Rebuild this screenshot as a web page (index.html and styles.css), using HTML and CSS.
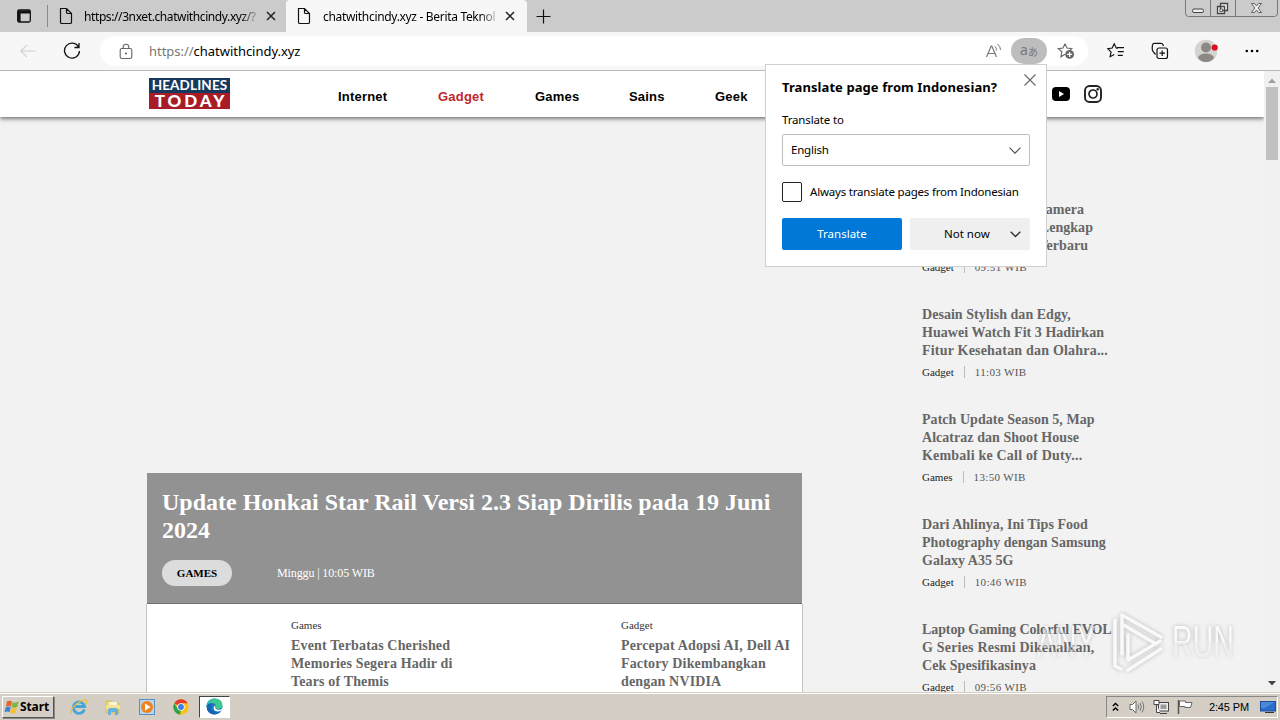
FILE: index.html
```
<!DOCTYPE html>
<html lang="id">
<head>
<meta charset="utf-8">
<title>chatwithcindy.xyz - Berita Teknologi</title>
<link rel="stylesheet" href="styles.css">
</head>
<body>
<div class="screen">
  <div class="tabstrip">
    <svg class="tab-actions" width="16" height="16" viewBox="0 0 16 16"><rect x="1.700" y="2" width="12.600" height="12" rx="1.500" fill="none" stroke="#111" stroke-width="1.300"/><path d="M2 2.500h12v3H2zM2 5h2.600v9H3L2 13z" fill="#111"/></svg>
    <div class="tab">
      <svg width="16" height="18" viewBox="0 0 16 18"><path d="M2.500 1.500h6l5 5v8.700q0 1.300-1.300 1.300H3.800q-1.300 0-1.300-1.300zM8.500 1.500v3.700q0 1.300 1.300 1.300h3.700" fill="none" stroke="#111" stroke-width="1.200"/></svg>
      <span class="tab-title">https://3nxet.chatwithcindy.xyz/?</span>
      <svg class="tab-close" width="10" height="10" viewBox="0 0 10 10"><path d="M1 1l8 8M9 1l-8 8" stroke="#222" stroke-width="1.500"/></svg>
    </div>
    <div class="tab tab-active">
      <svg width="16" height="18" viewBox="0 0 16 18"><path d="M2.500 1.500h6l5 5v8.700q0 1.300-1.300 1.300H3.800q-1.300 0-1.300-1.300zM8.500 1.500v3.700q0 1.300 1.300 1.300h3.700" fill="none" stroke="#111" stroke-width="1.200"/></svg>
      <span class="tab-title">chatwithcindy.xyz - Berita Teknol</span>
      <svg class="tab-close" width="10" height="10" viewBox="0 0 10 10"><path d="M1 1l8 8M9 1l-8 8" stroke="#222" stroke-width="1.500"/></svg>
    </div>
    <svg class="new-tab" width="15" height="15" viewBox="0 0 15 15"><path d="M7.500 .5v14M.5 7.500h14" stroke="#111" stroke-width="1.200"/></svg>
    <svg class="win-controls" width="94" height="17" viewBox="0 0 94 17"><path d="M.5 0v13q0 3.500 3 3.500h86q3 0 3-3.500V0M25.500 0v16M50.500 0v16" fill="none" stroke="#777"/><rect x="7.500" y="9" width="11" height="3.500" rx="1.500" fill="#eee" stroke="#444"/><path d="M35.500 3.500h7v7h-7zM32.500 6.500h7v7h-7z" fill="#eee" stroke="#444" stroke-width="1.300"/><rect x="35" y="9" width="2.500" height="2.500" fill="#fff" stroke="#444" stroke-width=".8"/><path d="M66.500 3.500h3l2 2.500 2-2.500h3l-3.300 4.500 3.300 4.500h-3l-2-2.500-2 2.500h-3l3.300-4.500z" fill="#eee" stroke="#555" stroke-width=".9"/></svg>
  </div>

  <div class="toolbar">
    <svg class="back" width="18" height="16" viewBox="0 0 18 16"><path d="M16.500 8H2M8 1.800L1.800 8 8 14.200" fill="none" stroke="#cfcfcf" stroke-width="1.100"/></svg>
    <svg class="reload" width="18" height="18" viewBox="0 0 18 18"><path d="M15.600 5A7.500 7.500 0 1 0 16.500 9M16 1v4.500h-4.500" fill="none" stroke="#111" stroke-width="1.300"/></svg>
    <div class="address">
      <svg width="14" height="17" viewBox="0 0 14 17"><rect x="1.200" y="5.500" width="11.600" height="10" rx="1.800" fill="none" stroke="#666" stroke-width="1.100"/><path d="M4.200 5.500V4a2.800 2.800 0 0 1 5.600 0v1.500" fill="none" stroke="#666" stroke-width="1.100"/><circle cx="7" cy="10.500" r="1" fill="#555"/></svg>
      <span class="url"><span class="scheme">https://</span>chatwithcindy.xyz</span>
      <svg class="read" width="18" height="16" viewBox="0 0 18 16"><path d="M2.500 14L7.200 3h.6L12.500 14M4.200 10.500h6.600" fill="none" stroke="#777" stroke-width="1.200"/><path d="M11 3.500q1.600 1.500 1.600 4M13.500 1q3 2.300 3 6" fill="none" stroke="#777"/></svg>
      <div class="translate-chip"><span class="chip-a">a</span><span class="chip-ja">あ</span></div>
      <svg class="star" width="18" height="18" viewBox="0 0 18 18"><path d="M8 1.800l2 4.300 4.800.5-3.400 3.300M8 12.200l-4.100 2.600 1-5L1.300 6.600 6 6.100 8 1.800" fill="none" stroke="#666" stroke-width="1.100"/><circle cx="12.600" cy="12.400" r="4.400" fill="#666"/><path d="M12.600 9.900v5M10.100 12.400h5" stroke="#fff" stroke-width="1.200"/></svg>
    </div>
    <svg class="favs" width="18" height="18" viewBox="0 0 18 18"><path d="M10.500 6.500L9.300 6 7.200 1.800 5.200 6l-4.400.7 3.200 3.200-.8 4.800 4-2.200" fill="none" stroke="#111" stroke-width="1.200"/><path d="M10 5.600h7M10.800 9.600h6M10.800 13.300h5" stroke="#111" stroke-width="1.300"/></svg>
    <svg class="collections" width="18" height="18" viewBox="0 0 18 18"><rect x="6" y="6" width="10.500" height="10.500" rx="2" fill="none" stroke="#111" stroke-width="1.200"/><path d="M11.200 8.500v5.500M8.500 11.200H14M4.500 12.500L2 9.500Q1 8 1.200 5.500L1.500 3q.3-1.600 2-1.600h6.700q1.600 0 2.300 2.600" fill="none" stroke="#111" stroke-width="1.200"/></svg>
    <svg class="avatar" width="24" height="24" viewBox="0 0 24 24"><circle cx="12" cy="12" r="11.300" fill="#d5d2d0"/><circle cx="12" cy="8.500" r="5" fill="#8b8886"/><path d="M4 19q1-4.500 8-4.500t8 4.500q-3 4-8 4t-8-4z" fill="#8b8886"/><circle cx="20.700" cy="8.500" r="3.100" fill="#e00b1c"/></svg>
    <svg class="more" width="14" height="4" viewBox="0 0 14 4"><circle cx="1.800" cy="2" r="1.300"/><circle cx="7" cy="2" r="1.300"/><circle cx="12.200" cy="2" r="1.300"/></svg>
  </div>

  <div class="viewport">
    <div class="site">
      <header class="site-header">
        <div class="logo"><span class="logo-top">HEADLINES</span><span class="logo-bottom">TODAY</span></div>
        <nav class="nav"><a>Internet</a><a class="current">Gadget</a><a>Games</a><a>Sains</a><a>Geek</a></nav>
        <div class="social">
          <svg width="18" height="14" viewBox="0 0 18 14"><rect width="18" height="14" rx="4"/><path d="M7 4l5 3-5 3z" fill="#fff"/></svg>
          <svg width="18" height="18" viewBox="0 0 18 18"><rect x="1" y="1" width="16" height="16" rx="4.500" fill="none" stroke="#222" stroke-width="1.900"/><circle cx="9" cy="9" r="4" fill="none" stroke="#222" stroke-width="1.700"/><circle cx="13.700" cy="4.300" r="1.200" fill="#222"/></svg>
        </div>
      </header>
      <div class="columns">
        <main class="main">
          <section class="hero">
            <h1>Update Honkai Star Rail Versi 2.3 Siap Dirilis pada 19 Juni<br>2024</h1>
            <div class="hero-meta"><span class="pill">GAMES</span><span class="hero-time">Minggu | 10:05 WIB</span></div>
          </section>
          <section class="cards">
            <article><p>Games</p><h2>Event Terbatas Cherished<br>Memories Segera Hadir di<br>Tears of Themis</h2></article>
            <article><p>Gadget</p><h2>Percepat Adopsi AI, Dell AI<br>Factory Dikembangkan<br>dengan NVIDIA</h2></article>
          </section>
        </main>
        <aside class="side">
          <article><h2 class="tail"><span class="t1">Kamera</span><span class="t2">Lengkap</span><span class="t3">Terbaru</span></h2><div class="meta"><b>Gadget</b><i></i><span>09:51 WIB</span></div></article>
          <article><h2>Desain Stylish dan Edgy,<br>Huawei Watch Fit 3 Hadirkan<br><span class="wide">Fitur Kesehatan dan Olahra...</span></h2><div class="meta"><b>Gadget</b><i></i><span>11:03 WIB</span></div></article>
          <article><h2>Patch Update Season 5, Map<br>Alcatraz dan Shoot House<br><span class="wide">Kembali ke Call of Duty...</span></h2><div class="meta"><b>Games</b><i></i><span>13:50 WIB</span></div></article>
          <article><h2>Dari Ahlinya, Ini Tips Food<br>Photography dengan Samsung<br>Galaxy A35 5G</h2><div class="meta"><b>Gadget</b><i></i><span>10:46 WIB</span></div></article>
          <article><h2><span class="tight">Laptop Gaming Colorful EVOL</span><br><span class="wide">G Series Resmi Dikenalkan,</span><br>Cek Spesifikasinya</h2><div class="meta"><b>Gadget</b><i></i><span>09:56 WIB</span></div></article>
        </aside>
      </div>
    </div>
    <div class="scrollbar">
      <svg width="8" height="5" viewBox="0 0 8 5"><path d="M0 5l4-4.500L8 5z" fill="#a0a0a0"/></svg>
      <div class="thumb"></div>
      <svg class="down" width="8" height="5" viewBox="0 0 8 5"><path d="M0 0l4 4.500L8 0z" fill="#444"/></svg>
    </div>
  </div>

  <div class="taskbar">
    <div class="start">
      <svg width="16" height="16" viewBox="0 0 16 16"><path d="M3 2.500q2.500-1.500 5 0L7 7.500q-2.500-1.500-5 0z" fill="#e8622a"/><path d="M8.600 3q2.500 1.500 6-.5l-1.300 5.500q-3 1.500-5.700 0z" fill="#7db842"/><path d="M1.700 8.200q2.500-1.500 5 0l-1.200 5q-2.500-1.500-5 0z" fill="#3f83d0"/><path d="M7.400 8.700q2.500 1.500 5.500 0L11.700 13.700q-3 1.500-5.500 0z" fill="#f6c22c"/></svg>
      <span>Start</span>
    </div>
    <svg class="ie" width="18" height="18" viewBox="0 0 18 18"><path d="M14.500 11.500A5.700 5.700 0 1 1 14.700 8.500H5" fill="none" stroke="#46a6dc" stroke-width="2.800"/><path d="M1.500 15.500Q-.5 12 6 6.500T16.500 2.500q1 1.500-1 4" fill="none" stroke="#e9bd3d" stroke-width="1.300"/></svg>
    <svg class="explorer" width="18" height="18" viewBox="0 0 18 18"><path d="M2 3h5l1 2h7v10H2z" fill="#edd477" stroke="#c9aa4c" stroke-width=".6"/><path d="M5 4h8v4H5z" fill="#f8f4d8"/><path d="M2 7h14v4H2z" fill="#f7e397"/><path d="M4 17v-5q0-2 2-2h6q2 0 2 2v5h-3v-3H7v3z" fill="#66b2dd"/></svg>
    <svg class="wmp" width="16" height="16" viewBox="0 0 16 16"><rect x=".5" y=".5" width="15" height="15" fill="#b8d6ef" stroke="#5a8fc0"/><circle cx="8" cy="8" r="6" fill="#f0831e"/><path d="M6 4.500l5.500 3.500L6 11.500z" fill="#fff"/></svg>
    <svg class="chrome" width="16" height="16" viewBox="0 0 16 16"><circle cx="8" cy="8" r="7.700" fill="#fbc116"/><path d="M8 8L1.300 4.200a7.700 7.700 0 0 1 13.400 0H8z" fill="#e33b2e"/><path d="M1.300 4.200L4.700 10 8 11.500l-1 4.100A7.700 7.700 0 0 1 1.300 4.200z" fill="#2da14c"/><circle cx="8" cy="8" r="3.700" fill="#fff"/><circle cx="8" cy="8" r="2.900" fill="#3a7de8"/></svg>
    <div class="task-active"><svg width="17" height="17" viewBox="0 0 17 17"><circle cx="8.500" cy="8.500" r="8" fill="#1679c9"/><path d="M.6 7Q2 .8 8.500.5q7.500.3 8 6.500 0 4-4.500 4-3 0-2-2.500Q10 5 6 5 2.500 5 .6 8z" fill="#3fc98e"/><path d="M.6 7Q2 2 7 1.500 3 4 .6 8z" fill="#29b5cc"/><path d="M6 6q-2.500 4 1 7t8-.5q-3 4-7 4Q1 16 .6 8 3 4.500 6 6z" fill="#1566b0"/><path d="M9.500 8.500q-1 3 3 3.300 2.500 0 4-1.500l-1.300 2.400q-5 1.800-7-.7-1.400-2 .3-4.500z" fill="#fff"/></svg></div>
    <div class="tray">
      <svg width="7" height="10" viewBox="0 0 7 10"><path d="M.8 4l2.700-2.500L6.200 4M.8 8.500L3.500 6l2.700 2.500" fill="none" stroke="#000" stroke-width="1.400"/></svg>
      <svg class="vol" width="16" height="14" viewBox="0 0 16 14"><path d="M1 4.500h2.500L7 1v12L3.500 9.500H1z" fill="#fff" stroke="#666"/><path d="M9 4.500q1.500 2.500 0 5M11 3q2.500 4 0 8M13 1.500q3.500 5.500 0 11" fill="none" stroke="#777"/></svg>
      <svg class="net" width="16" height="16" viewBox="0 0 16 16"><rect x="5.500" y="3.500" width="10" height="8.500" fill="#eee" stroke="#444"/><rect x="7.500" y="5.500" width="6" height="4.500" fill="#999"/><path d="M7 14.500h7M1 1.500h5v4H1zM3.500 5.500v8H7" fill="#fff" stroke="#444"/></svg>
      <svg class="flag" width="16" height="16" viewBox="0 0 16 16"><path d="M1.500 1v14" stroke="#555" stroke-width="1.500"/><path d="M2.500 2h6v1.500h6.500l-1.500 5H8V7.500H2.500z" fill="#fff" stroke="#666"/></svg>
      <span class="clock">2:45 PM</span>
      <svg class="desk" width="16" height="14" viewBox="0 0 16 14"><rect x=".5" y="1.500" width="15" height="9.500" fill="#2a6ccc" stroke="#1d4f9c"/><path d="M1 2h14L5 8H1z" fill="#4a88d8"/><path d="M5 12.500h9" stroke="#333"/></svg>
    </div>
  </div>

  <div class="popup">
    <div class="popup-head"><strong>Translate page from Indonesian?</strong><svg width="12" height="12" viewBox="0 0 12 12"><path d="M.5.5l11 11M11.500.5l-11 11" stroke="#666" stroke-width="1.100"/></svg></div>
    <label class="to">Translate to</label>
    <div class="select"><span>English</span><svg width="12" height="7" viewBox="0 0 12 7"><path d="M.5.7L6 6.200 11.500.7" fill="none" stroke="#555" stroke-width="1.200"/></svg></div>
    <div class="always"><i></i><span>Always translate pages from Indonesian</span></div>
    <div class="buttons"><div class="primary">Translate</div><div class="secondary"><span>Not now</span><svg width="11" height="7" viewBox="0 0 11 7"><path d="M.7.7l4.800 4.800L10.300.7" fill="none" stroke="#333" stroke-width="1.400"/></svg></div></div>
  </div>

  <div class="watermark"><span>ANY</span><svg width="60" height="68" viewBox="0 0 60 68"><path d="M14 46V7L53 29M14 16l34 20M20 27v25l32-19M20 62l33-21M7 12v46l6 3" fill="none" stroke="#fff" stroke-width="3.500" stroke-linejoin="round" stroke-linecap="round"/></svg><span>RUN</span></div>
</div>
</body>
</html>
```
FILE: styles.css
```
* { box-sizing: border-box; }
body { margin: 0; }
h1, h2, p { margin: 0; }
svg { display: block; flex: none; }
.screen { position: relative; width: 1280px; height: 720px; overflow: hidden; display: flex; flex-direction: column; font-family: "Noto Sans", "Open Sans", sans-serif; font-size: 12px; color: #000; background: #f2f2f2; white-space: nowrap; }

.tabstrip { height: 32px; flex: none; display: flex; align-items: center; background: #cbcbcb; padding-left: 16px; }
.tab { height: 32px; width: 238px; margin-left: 15px; border-left: 1px solid #8a8a8a; border-image: linear-gradient(transparent 6px, #8a8a8a 6px, #8a8a8a 26px, transparent 26px) 1; display: flex; align-items: center; padding-left: 10px; }
.tab-title { width: 174px; margin-left: 10px; letter-spacing: -.4px; -webkit-mask-image: linear-gradient(90deg, #000 90%, transparent 102%); mask-image: linear-gradient(90deg, #000 90%, transparent 102%); }
.tab-close { margin-left: 8px; }
.tab-active { margin-left: 1px; width: 241px; border: 0; border-radius: 4px 4px 0 0; background: #f7f7f7; }
.tab-active .tab-title { margin-left: 11px; letter-spacing: -.32px; }
.new-tab { margin-left: 9px; }
.win-controls { margin: 0 1px 0 auto; align-self: flex-start; }

.toolbar { height: 39px; flex: none; display: flex; align-items: center; background: #f7f7f7; border-bottom: 1px solid #b8b8b8; padding-left: 19px; }
.reload { margin-left: 26px; }
.address { width: 988px; height: 30px; margin-left: 19px; border-radius: 15px; background: #fff; display: flex; align-items: center; padding-left: 19px; }
.url { margin-left: 16px; font-size: 13px; letter-spacing: -.03px; }
.scheme { color: #777; }
.read { margin-left: auto; }
.translate-chip { width: 36px; height: 26px; border-radius: 13px; margin: 0 10px 0 9px; background: #bdbdbd; color: #777; display: flex; align-items: center; justify-content: center; line-height: 20px; }
.chip-a { font-size: 14px; margin-top: -2px; }
.chip-ja { font: 10px "Noto Sans CJK JP", sans-serif; }
.star { margin-right: 13px; }
.favs { margin-left: 19px; }
.collections { margin-left: 26px; }
.avatar { margin-left: 25px; }
.more { margin-left: 27px; }

.viewport { height: 621px; flex: none; display: flex; }
.site { width: 1264px; height: 621px; overflow: hidden; }
.site-header { height: 46px; background: #fff; box-shadow: 0 2px 4px rgba(0,0,0,.5); display: flex; align-items: flex-start; padding-left: 149px; }
.logo { width: 81px; margin-top: 7px; color: #fff; font-family: Lato, sans-serif; font-weight: 700; text-align: center; }
.logo-top { display: block; height: 15px; line-height: 15px; font-size: 13.500px; letter-spacing: .15px; background: #17395c; }
.logo-bottom { display: block; height: 16px; line-height: 16px; font-size: 17px; font-weight: 900; letter-spacing: 2.900px; padding-left: 3px; background: #a81c28; }
.nav { margin-left: 108px; display: grid; grid-template-columns: 100px 97px 94px 86px 60px; line-height: 52px; font-family: "Liberation Sans", sans-serif; font-weight: 700; font-size: 13px; letter-spacing: .2px; }
.current { color: #c1272d; }
.social { display: flex; align-items: center; gap: 14px; margin: 14px 0 0 277px; }

.columns { height: 575px; display: flex; padding-left: 147px; font-family: "Liberation Serif", serif; }
.main { width: 656px; padding-top: 356px; }
.hero { width: 655px; height: 131px; background: #929292; border-bottom: 1px solid #6f6f6f; padding: 15px; color: #fff; }
.hero h1 { font-size: 24px; line-height: 28px; letter-spacing: 0; }
.hero-meta { margin-top: 16px; display: flex; align-items: center; font-size: 12px; }
.hero-time { letter-spacing: -.12px; }
.pill { width: 70px; height: 26px; border-radius: 13px; margin-right: 45px; background: #dcdcdc; color: #000; font-weight: 700; font-size: 11px; line-height: 26px; text-align: center; }
.cards { height: 88px; display: flex; background: #fff; border: 1px solid #c4c4c4; border-width: 0 1px; margin-left: -1px; padding: 13px 0 0 144px; }
.cards article { width: 330px; flex: none; }
.cards p { font-size: 11px; line-height: 16px; color: #333; }
h2 { font-size: 14px; line-height: 18px; color: #666; letter-spacing: .15px; }
.cards h2 { margin-top: 4px; }
.side { margin-left: 119px; padding-top: 84px; }
.side article { height: 105px; }
.side h2 { letter-spacing: .04px; }
.side .wide { letter-spacing: .2px; }
.side .tight { letter-spacing: -.1px; }
.meta { display: flex; align-items: center; height: 18px; margin-top: 3px; font-size: 11px; color: #555; }
.meta span { letter-spacing: .35px; }
.meta b { font-weight: 400; color: #222; }
.meta i { width: 1px; height: 12px; margin: 0 9.500px 0 10.500px; background: #bbb; }
.tail span { display: block; text-align: right; }
.t1 { width: 162px; }
.t2 { width: 171px; }
.t3 { width: 166px; }
.scrollbar { width: 16px; display: flex; flex-direction: column; align-items: center; padding: 7px 0 6px; background: #f1f1f1; }
.thumb { width: 12px; height: 73px; margin-top: 4px; background: #c1c1c1; }
.down { margin-top: auto; }

.taskbar { height: 28px; flex: none; display: flex; align-items: center; background: #d5cec5; border-top: 1px solid #d5cec5; box-shadow: inset 0 1px #fff; padding: 0 1px 0 2px; }
.start { width: 52px; height: 22px; display: flex; align-items: center; padding-left: 1px; font-weight: 700; font-size: 12px; letter-spacing: -.1px; border: 1px solid; border-color: #fff #555 #555 #fff; box-shadow: 1px 1px #888; }
.ie { margin-left: 16px; }
.explorer { margin-left: 16px; }
.wmp { margin-left: 17px; }
.chrome { margin-left: 18px; }
.task-active { width: 31px; height: 22px; margin-left: 10px; display: flex; align-items: center; justify-content: center; background: #fff; border: 1px solid; border-color: #444 #fff #fff #444; }
.tray { width: 172px; height: 22px; margin-left: auto; margin-right: 1px; display: flex; align-items: center; padding-left: 5px; border: 1px solid; border-color: #888 #fff #fff #888; }
.vol { margin-left: 10px; }
.net { margin-left: 8px; }
.flag { margin-left: 8px; }
.clock { margin-left: 16px; font-family: "Liberation Sans", sans-serif; font-size: 11px; letter-spacing: -.15px; }
.desk { margin: 0 1px 0 auto; }

.popup { position: absolute; left: 765px; top: 64px; width: 282px; height: 203px; background: #fff; border: 1px solid #cfcfcf; padding: 9px 16px; font-size: 11.500px; }
.popup-head { height: 28px; display: flex; align-items: flex-start; justify-content: space-between; }
.popup-head strong { font-size: 13px; line-height: 27px; letter-spacing: .08px; }
.popup-head svg { margin-right: -6px; }
.to { display: block; line-height: 36px; height: 32px; letter-spacing: -.15px; }
.select { height: 32px; display: flex; align-items: center; justify-content: space-between; padding: 0 8px; border: 1px solid #bebebe; border-radius: 2px; }
.select span, .always span { margin-top: -2px; letter-spacing: -.2px; }
.always { display: flex; align-items: center; gap: 8px; margin-top: 16px; }
.always i { width: 20px; height: 20px; border: 1px solid #222; border-radius: 2px; }
.buttons { display: grid; grid-template-columns: 120px 120px; gap: 8px; margin-top: 16px; line-height: 32px; text-align: center; }
.primary { background: #0078d7; color: #fff; border-radius: 2px; }
.secondary { background: #efefef; border-radius: 2px; display: flex; align-items: center; justify-content: space-between; padding: 0 9px 0 34px; }

.watermark { position: absolute; left: 1037px; top: 606px; display: flex; align-items: center; gap: 4px; opacity: .6; font: 400 44px/72px "Liberation Sans", sans-serif; filter: drop-shadow(0 0 2px rgba(0,0,0,.4)); }
.watermark span { display: block; width: 100px; margin-right: -33px; transform: scaleX(.65); transform-origin: 0 50%; background: linear-gradient(#fff 50%, rgba(255,255,255,.6) 51%); -webkit-background-clip: text; background-clip: text; color: transparent; }
```
